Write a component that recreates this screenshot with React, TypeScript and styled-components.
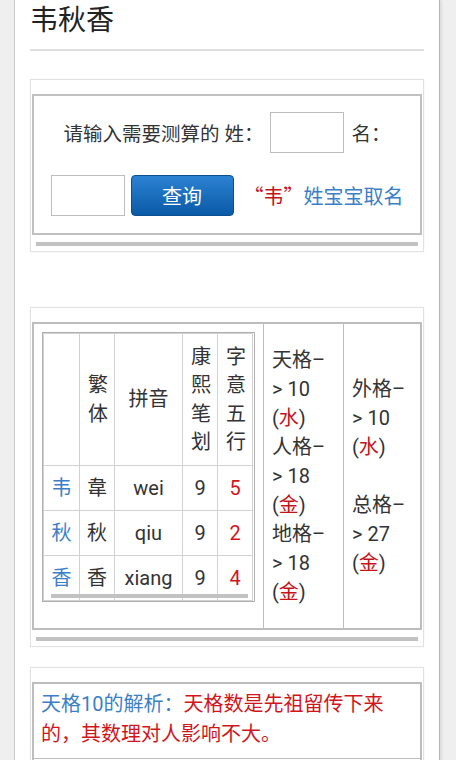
import styled, { createGlobalStyle } from 'styled-components'

const GlobalStyle = createGlobalStyle`
	body {
		margin: 0;
		background: #efefef;
		font-family: Roboto, "Noto Sans CJK SC", sans-serif;
		color: #333;
	}
`

const Page = styled.div`
	box-sizing: border-box;
	width: 426px;
	min-height: 100vh;
	margin-left: 14px;
	padding: 0 15px 40px;
	background: #fff;
	border-left: 1px solid #cacaca;
	border-right: 1px solid #b4b4b4;
	box-shadow: 2px 0 2px rgba(0, 0, 0, 0.08);
`
const Title = styled.h1`
	margin: 0;
	padding: 3px 0 10px 0;
	font-size: 28px;
	line-height: 36px;
	font-weight: normal;
	color: #222;
	border-bottom: 2px solid #dedede;
`
const Box = styled.div<{ $top: number }>`
	margin-top: ${p => p.$top}px;
	padding: 14px 1px 0;
	border: 1px solid #e2e2e2;
	box-shadow: 0 0 2px rgba(0, 0, 0, 0.05);
`
const ScrollBar = styled.div`
	height: 4px;
	margin: 7px 4px 5px;
	background: #c2c2c2;
`
const FormPanel = styled.div`
	display: flex;
	flex-direction: column;
	align-items: center;
	gap: 22px;
	padding: 16px 0 17px;
	border: 2px solid #c0c0c0;
	font-size: 19.5px;
	color: #333;
`
const FormRow = styled.div`
	display: flex;
	align-items: center;
	gap: 7px;
`
const Input = styled.input`
	box-sizing: border-box;
	width: 74px;
	height: 41px;
	margin: 0;
	border: 1px solid #bdbdbd;
	background: #fff;
`
const Button = styled.button`
	box-sizing: border-box;
	width: 103px;
	height: 41px;
	margin: 0 3px 0 -1px;
	border: 1px solid #0b4f8f;
	border-radius: 4px;
	background: linear-gradient(#2b82d2, #0a5aa6);
	color: #fff;
	font-family: inherit;
	font-size: 20px;
`
const Quote = styled.span`
	color: #c4141a;
	font-family: "Noto Sans CJK SC", sans-serif;
	font-size: 20px;
`
const Link = styled.a`
	color: #3c7fc6;
	font-size: 20px;
	text-decoration: none;
`
const Grid = styled.table`
	box-sizing: border-box;
	width: 100%;
	border-collapse: collapse;
	border: 2px solid #bdbdbd;
	font-size: 20px;
	line-height: 29px;
`
const Cell = styled.td<{ $top?: boolean }>`
	padding: ${p => (p.$top ? '8px 8px 26px' : '0 8px')};
	vertical-align: ${p => (p.$top ? 'top' : 'middle')};
	border-left: 1px solid #bdbdbd;
	color: #333;
`
const Inner = styled.div`
	position: relative;
	width: 211px;
	border: 1px solid #b0b0b0;
	&::after {
		content: '';
		position: absolute;
		left: 8px;
		right: 6px;
		bottom: 3px;
		height: 4px;
		background: #c2c2c2;
	}
`
const CharTable = styled.table`
	width: 209px;
	table-layout: fixed;
	border-collapse: collapse;
	text-align: center;
`
const Row = styled.tr<{ $h: number }>`
	height: ${p => p.$h}px;
`
const Th = styled.td`
	padding: 0 8px;
	border: 1px solid #d2d2d2;
	font-weight: normal;
	line-height: 28.5px;
	color: #333;
	word-break: break-all;
`
const Td = styled.td<{ $tone?: 'blue' | 'red' }>`
	padding: 0;
	border: 1px solid #d2d2d2;
	line-height: 28px;
	color: ${p => (p.$tone === 'blue' ? '#3c7fc6' : p.$tone === 'red' ? '#d0161d' : '#333')};
`
const Red = styled.span`
	color: #c4141a;
`
const Note = styled.td`
	padding: 6px 30px 9px 7px;
	border-bottom: 1px solid #bdbdbd;
	line-height: 29.5px;
	color: #d0161d;
`
const Blue = styled.span`
	color: #3c7fc6;
`

const chars = [
	{ s: '韦', t: '韋', py: 'wei', n: 9, wx: 5 },
	{ s: '秋', t: '秋', py: 'qiu', n: 9, wx: 2 },
	{ s: '香', t: '香', py: 'xiang', n: 9, wx: 4 },
]

export default function App() {
	return <>
		<GlobalStyle />
		<Page>
			<Title>韦秋香</Title>

			<Box $top={28}>
				<FormPanel>
					<FormRow>
						<span>请输入需要测算的 姓：</span>
						<Input />
						<span>名：</span>
					</FormRow>
					<FormRow>
						<Input />
						<Button>查询</Button>
						<span><Quote>“韦”</Quote><Link href="#">姓宝宝取名</Link></span>
					</FormRow>
				</FormPanel>
				<ScrollBar />
			</Box>

			<Box $top={55}>
				<Grid>
					<colgroup>
						<col style={{ width: 228 }} />
						<col style={{ width: 80 }} />
						<col />
					</colgroup>
					<tbody>
						<tr>
							<Cell $top>
								<Inner>
									<CharTable>
										<colgroup>
											<col style={{ width: 36 }} />
											<col style={{ width: 35 }} />
											<col style={{ width: 68 }} />
											<col style={{ width: 35 }} />
											<col style={{ width: 35 }} />
										</colgroup>
										<tbody>
											<Row $h={132}>
												<Th></Th>
												<Th>繁体</Th>
												<Th>拼音</Th>
												<Th>康熙笔划</Th>
												<Th>字意五行</Th>
											</Row>
											{chars.map(c => <Row $h={45} key={c.s}>
												<Td $tone="blue">{c.s}</Td>
												<Td>{c.t}</Td>
												<Td>{c.py}</Td>
												<Td>{c.n}</Td>
												<Td $tone="red">{c.wx}</Td>
											</Row>)}
										</tbody>
									</CharTable>
								</Inner>
							</Cell>
							<Cell>
								天格–<br />&gt; 10<br />(<Red>水</Red>)<br />
								人格–<br />&gt; 18<br />(<Red>金</Red>)<br />
								地格–<br />&gt; 18<br />(<Red>金</Red>)
							</Cell>
							<Cell>
								外格–<br />&gt; 10<br />(<Red>水</Red>)<br /><br />
								总格–<br />&gt; 27<br />(<Red>金</Red>)
							</Cell>
						</tr>
					</tbody>
				</Grid>
				<ScrollBar />
			</Box>

			<Box $top={20}>
				<Grid>
					<tbody>
						<tr>
							<Note><Blue>天格10的解析：</Blue>天格数是先祖留传下来的，其数理对人影响不大。</Note>
						</tr>
						<tr>
							<Note><Blue>人格18的解析：</Blue>有权威，能得志成功，但需防刚强。</Note>
						</tr>
					</tbody>
				</Grid>
				<ScrollBar />
			</Box>
		</Page>
	</>
}
